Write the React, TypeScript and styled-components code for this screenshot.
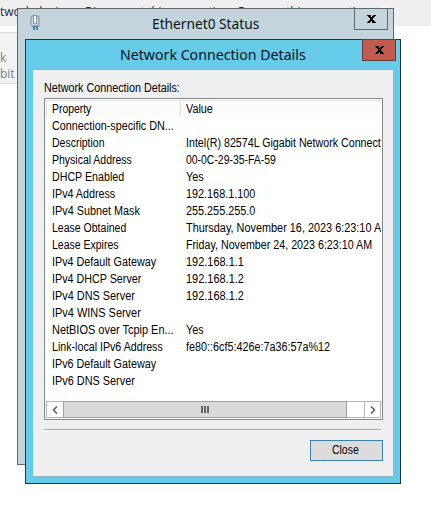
import React, { useLayoutEffect, useRef } from "react";
import styled, { createGlobalStyle } from "styled-components";

const GlobalStyle = createGlobalStyle`
  * { box-sizing: border-box; }
  body { margin: 0; background: #fff; overflow: hidden; }
`;

const Desktop = styled.div`
  position: relative;
  width: 431px;
  height: 516px;
  overflow: hidden;
  background: #fff;
  font: 12px/17px "Liberation Sans", Arial, sans-serif;
  color: #000;
`;

const CommandBar = styled.div`
  height: 26px;
  padding-top: 2px;
  display: flex;
  background: #efefef;
  font: 12px/19px "Open Sans", sans-serif;
  color: #1e1e3c;
`;

const Command = styled.span<{ $w: number }>`
  flex: 0 0 ${(p) => p.$w}px;
  white-space: nowrap;
`;

const More = styled.span`
  line-height: 10px;
  color: #fff;
`;

const AdapterTile = styled.div`
  margin-top: 6px;
  height: 52px;
  width: 30px;
  padding-top: 17px;
  border: solid #d9d9d9;
  border-width: 1px 0;
  background: #f3f3f3;
  font: 12px/16px "Open Sans", sans-serif;
  color: #808080;
`;

const AdapterLine = styled.div`
  display: flex;
  gap: 3px;
  height: 16px;
`;

const Highlight = styled.span`
  width: 4px;
  background: #f4eec6;
`;

const StatusWindow = styled.div`
  position: absolute;
  left: 17px;
  top: 8px;
  width: 377px;
  height: 457px;
  border: 1px solid #60686e;
  background: #c3d5db;
`;

const DetailsWindow = styled.div`
  position: absolute;
  left: 25px;
  top: 39px;
  width: 376px;
  height: 445px;
  padding: 0 7px 7px;
  display: flex;
  flex-direction: column;
  border: 1px solid #22313a;
  background: #66cae9;
`;

const TitleBar = styled.div<{ $line: number }>`
  position: relative;
  flex: 0 0 29px;
  height: 29px;
  display: flex;
  justify-content: center;
  font: 15px / ${(p) => p.$line}px "Noto Sans", "Open Sans", sans-serif;
  color: #07131c;
`;

const CloseBox = styled.button<{ $red?: boolean; $right: number }>`
  position: absolute;
  right: ${(p) => p.$right}px;
  top: -1px;
  width: 34px;
  height: 22px;
  padding: 0 0 0 1px;
  display: flex;
  align-items: center;
  justify-content: center;
  border: 1px solid ${(p) => (p.$red ? "#663b3c" : "#5c676e")};
  background: ${(p) => (p.$red ? "#c35a50" : "#c3d5db")};
`;

const AdapterIcon = styled.svg`
  position: absolute;
  left: 12px;
  top: 5px;
`;

const Client = styled.div`
  flex: 1;
  padding: 10px 10px 15px 11px;
  display: flex;
  flex-direction: column;
  border: solid #8fb4c2;
  border-width: 1px 0;
  background: #efefef;
`;

const Caption = styled.div`
  height: 18px;
`;

const ListView = styled.div`
  height: 322px;
  padding: 1px;
  display: flex;
  flex-direction: column;
  border: 1px solid #828790;
  background: #fff;
`;

const Columns = styled.div`
  display: grid;
  grid-template-columns: 134px 1fr;
  height: 17px;
  overflow: hidden;
`;

const HeaderCell = styled.div`
  padding-left: 5px;
  line-height: 16px;
  border: solid #e1e1e1;
  border-width: 1px 0 1px 1px;
  background: #fcfcfc;
`;

const Rows = styled.div`
  flex: 1;
  padding-top: 1px;
`;

const Cell = styled.div`
  padding-left: 5.5px;
  overflow: hidden;
  white-space: nowrap;
`;

const Fit = styled.span`
  display: inline-block;
  white-space: nowrap;
  transform-origin: 0 50%;
`;

const ScrollBar = styled.div`
  display: flex;
  height: 17px;
  border: 1px solid #b5b5b5;
  background: #fff;
`;

const Arrow = styled.div<{ $end?: boolean }>`
  flex: 0 0 16px;
  display: flex;
  align-items: center;
  justify-content: center;
  border-left: ${(p) => (p.$end ? "1px solid #b5b5b5" : "0")};
`;

const Thumb = styled.div`
  flex: 0 0 284px;
  margin: -1px 17px -1px 0;
  display: flex;
  align-items: center;
  justify-content: center;
  gap: 1px;
  border: 1px solid #a0a0a0;
  background: #dadada;
`;

const Grip = styled.i`
  width: 2px;
  height: 7px;
  background: #666;
`;

const Separator = styled.div`
  margin: 9px 2px 0 0;
  height: 2px;
  border-top: 1px solid #a0a0a0;
  border-bottom: 1px solid #fff;
`;

const CloseButton = styled.button`
  align-self: flex-end;
  margin-top: 9px;
  width: 73px;
  height: 21px;
  padding: 0 3px 0 0;
  border: 1px solid #3c7fb1;
  background: #dcdcdc;
  color: #000;
  font: 12px/19px "Liberation Sans", Arial, sans-serif;
`;

/* Text condensed or widened so that it fills the given width. */
function Text({ children, w }: { children: string; w: number }) {
  const ref = useRef<HTMLSpanElement>(null);
  useLayoutEffect(() => {
    const el = ref.current;
    if (!el) return;
    const natural = el.offsetWidth;
    el.style.transform = `scaleX(${w / natural})`;
    el.style.marginRight = `${w - natural}px`;
  }, [children, w]);
  return <Fit ref={ref}>{children}</Fit>;
}

function Cross() {
  return (
    <svg width="10" height="8" viewBox="0 0 10 8" shapeRendering="crispEdges">
      <path
        fill="#000"
        d="M0 0h4v1H0zM6 0h3v1H6zM1 1h3v1H1zM5 1h3v1H5zM2 2h5v1H2zM3 3h3v2H3zM2 5h5v1H2zM1 6h3v1H1zM5 6h3v1H5zM0 7h3v1H0zM5 7h4v1H5z"
      />
    </svg>
  );
}

type Row = [string, number, string?, number?];
const rows: Row[] = [
  ["Connection-specific DN...", 121.5],
  ["Description", 52.5, "Intel(R) 82574L Gigabit Network Connection", 209],
  ["Physical Address", 79.5, "00-0C-29-35-FA-59", 89.5],
  ["DHCP Enabled", 72, "Yes", 18],
  ["IPv4 Address", 63.5, "192.168.1.100", 69.5],
  ["IPv4 Subnet Mask", 87.5, "255.255.255.0", 69.5],
  ["Lease Obtained", 74.5, "Thursday, November 16, 2023 6:23:10 AM", 204],
  ["Lease Expires", 66.5, "Friday, November 24, 2023 6:23:10 AM", 186.5],
  ["IPv4 Default Gateway", 104, "192.168.1.1", 57.5],
  ["IPv4 DHCP Server", 89.5, "192.168.1.2", 57.5],
  ["IPv4 DNS Server", 82.5, "192.168.1.2", 57.5],
  ["IPv4 WINS Server", 88.5],
  ["NetBIOS over Tcpip En...", 121.5, "Yes", 18],
  ["Link-local IPv6 Address", 111, "fe80::6cf5:426e:7a36:57a%12", 144],
  ["IPv6 Default Gateway", 104],
  ["IPv6 DNS Server", 82.5],
];

export default function App() {
  return (
    <Desktop>
      <GlobalStyle />
      <CommandBar>
        <Command $w={85}>twork device</Command>
        <Command $w={153}>
          <Text w={145}>Disconnect this connection</Text>
        </Command>
        <Command $w={143}>
          <Text w={132}>Rename this connection</Text>
        </Command>
        <More>»</More>
      </CommandBar>
      <AdapterTile>
        <AdapterLine>k</AdapterLine>
        <AdapterLine>
          bit
          <Highlight />
        </AdapterLine>
      </AdapterTile>

      <StatusWindow>
        <TitleBar $line={29}>
          <AdapterIcon width="11" height="17" viewBox="0 0 11 17">
            <rect x="1" y="2" width="8" height="10" rx="1.5" fill="#c7d0e4" stroke="#7e8eac" />
            <rect x="3.5" y="1.5" width="3" height="8" fill="#f4f7fc" stroke="#7686a8" strokeWidth=".8" />
            <path d="M2.5 12.5h6" stroke="#5c7397" />
            <path d="M3 13h2v3H3zM6 13h2v3H6z" fill="#2299c7" />
          </AdapterIcon>
          <Text w={107}>Ethernet0 Status</Text>
          <CloseBox $right={5} aria-label="Close status">
            <Cross />
          </CloseBox>
        </TitleBar>
      </StatusWindow>

      <DetailsWindow>
        <TitleBar $line={29}>
          <Text w={186}>Network Connection Details</Text>
          <CloseBox $red $right={-3} aria-label="Close details">
            <Cross />
          </CloseBox>
        </TitleBar>
        <Client>
          <Caption>
            <Text w={135.5}>Network Connection Details:</Text>
          </Caption>
          <ListView>
            <Columns>
              <HeaderCell>
                <Text w={39}>Property</Text>
              </HeaderCell>
              <HeaderCell>
                <Text w={27}>Value</Text>
              </HeaderCell>
            </Columns>
            <Rows>
              {rows.map(([name, nameWidth, value, valueWidth]) => (
                <Columns key={name}>
                  <Cell>
                    <Text w={nameWidth}>{name}</Text>
                  </Cell>
                  <Cell>{value && <Text w={valueWidth ?? 0}>{value}</Text>}</Cell>
                </Columns>
              ))}
            </Rows>
            <ScrollBar>
              <Arrow>
                <svg width="6" height="8" viewBox="0 0 6 8">
                  <path d="M5 .5 1.5 4 5 7.5" fill="none" stroke="#606060" strokeWidth="1.6" />
                </svg>
              </Arrow>
              <Thumb>
                <Grip />
                <Grip />
                <Grip />
              </Thumb>
              <Arrow $end>
                <svg width="6" height="8" viewBox="0 0 6 8">
                  <path d="M1 .5 4.5 4 1 7.5" fill="none" stroke="#606060" strokeWidth="1.6" />
                </svg>
              </Arrow>
            </ScrollBar>
          </ListView>
          <Separator />
          <CloseButton>
            <Text w={27}>Close</Text>
          </CloseButton>
        </Client>
      </DetailsWindow>
    </Desktop>
  );
}
